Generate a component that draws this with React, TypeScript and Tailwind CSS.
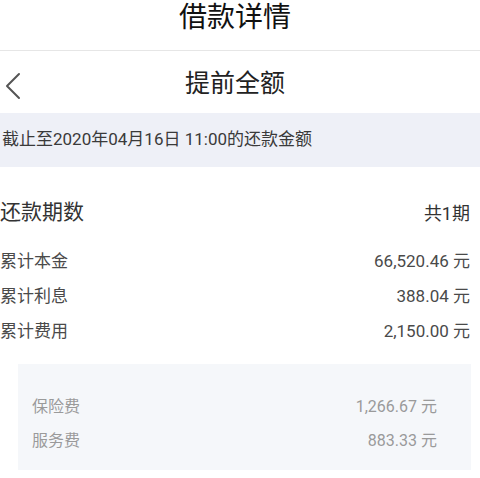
import React from "react";

const rows = [
  { label: "累计本金", value: "66,520.46 元" },
  { label: "累计利息", value: "388.04 元" },
  { label: "累计费用", value: "2,150.00 元" },
];

const fees = [
  { label: "保险费", value: "1,266.67 元" },
  { label: "服务费", value: "883.33 元" },
];

export default function App() {
  return (
    <div className="w-[480px] h-[478px] overflow-hidden bg-white font-[Roboto,'Noto_Sans_CJK_SC',sans-serif]">
      {/* page title */}
      <div className="h-[50px] border-b border-[#e6e6e6] box-content">
        <div className="h-9 leading-9 text-center text-[28px] text-[#111] pr-[10px]">借款详情</div>
      </div>

      {/* nav bar */}
      <div className="relative h-[62px] flex items-center justify-center pt-1 pr-[10px]">
        <svg
          className="absolute left-[4px] top-[21px]"
          width="18"
          height="28"
          viewBox="0 0 18 28"
          fill="none"
          stroke="#555"
          strokeWidth="2"
          strokeLinecap="round"
          strokeLinejoin="round"
        >
          <path d="M15 2 L3 14 L15 26" />
        </svg>
        <span className="text-[25px] text-[#222]">提前全额</span>
      </div>

      {/* notice band */}
      <div className="h-[54px] bg-[#eef0f7] flex items-center pl-[2px] text-[17px] text-[#3a3a3a]">
        截止至2020年04月16日 11:00的还款金额
      </div>

      {/* summary */}
      <div className="pr-[10px]">
        <div className="mt-8 h-7 flex items-center justify-between">
          <span className="text-[21px] text-[#333]">还款期数</span>
          <span className="text-[18px] text-[#333]">共1期</span>
        </div>
        <div className="mt-[17px] flex flex-col">
          {rows.map((r) => (
            <div key={r.label} className="h-[35px] flex items-center justify-between text-[17px] text-[#4a4a4a]">
              <span>{r.label}</span>
              <span>{r.value}</span>
            </div>
          ))}
        </div>
      </div>

      {/* fee breakdown */}
      <div className="mt-[15px] ml-[18px] mr-[9px] h-[106px] bg-[#f5f7fa] pt-[26px] pl-[14px] pr-[34px]">
        {fees.map((f) => (
          <div key={f.label} className="h-[34px] flex items-center justify-between text-[16px] text-[#9a9a9a]">
            <span>{f.label}</span>
            <span>{f.value}</span>
          </div>
        ))}
      </div>
    </div>
  );
}
